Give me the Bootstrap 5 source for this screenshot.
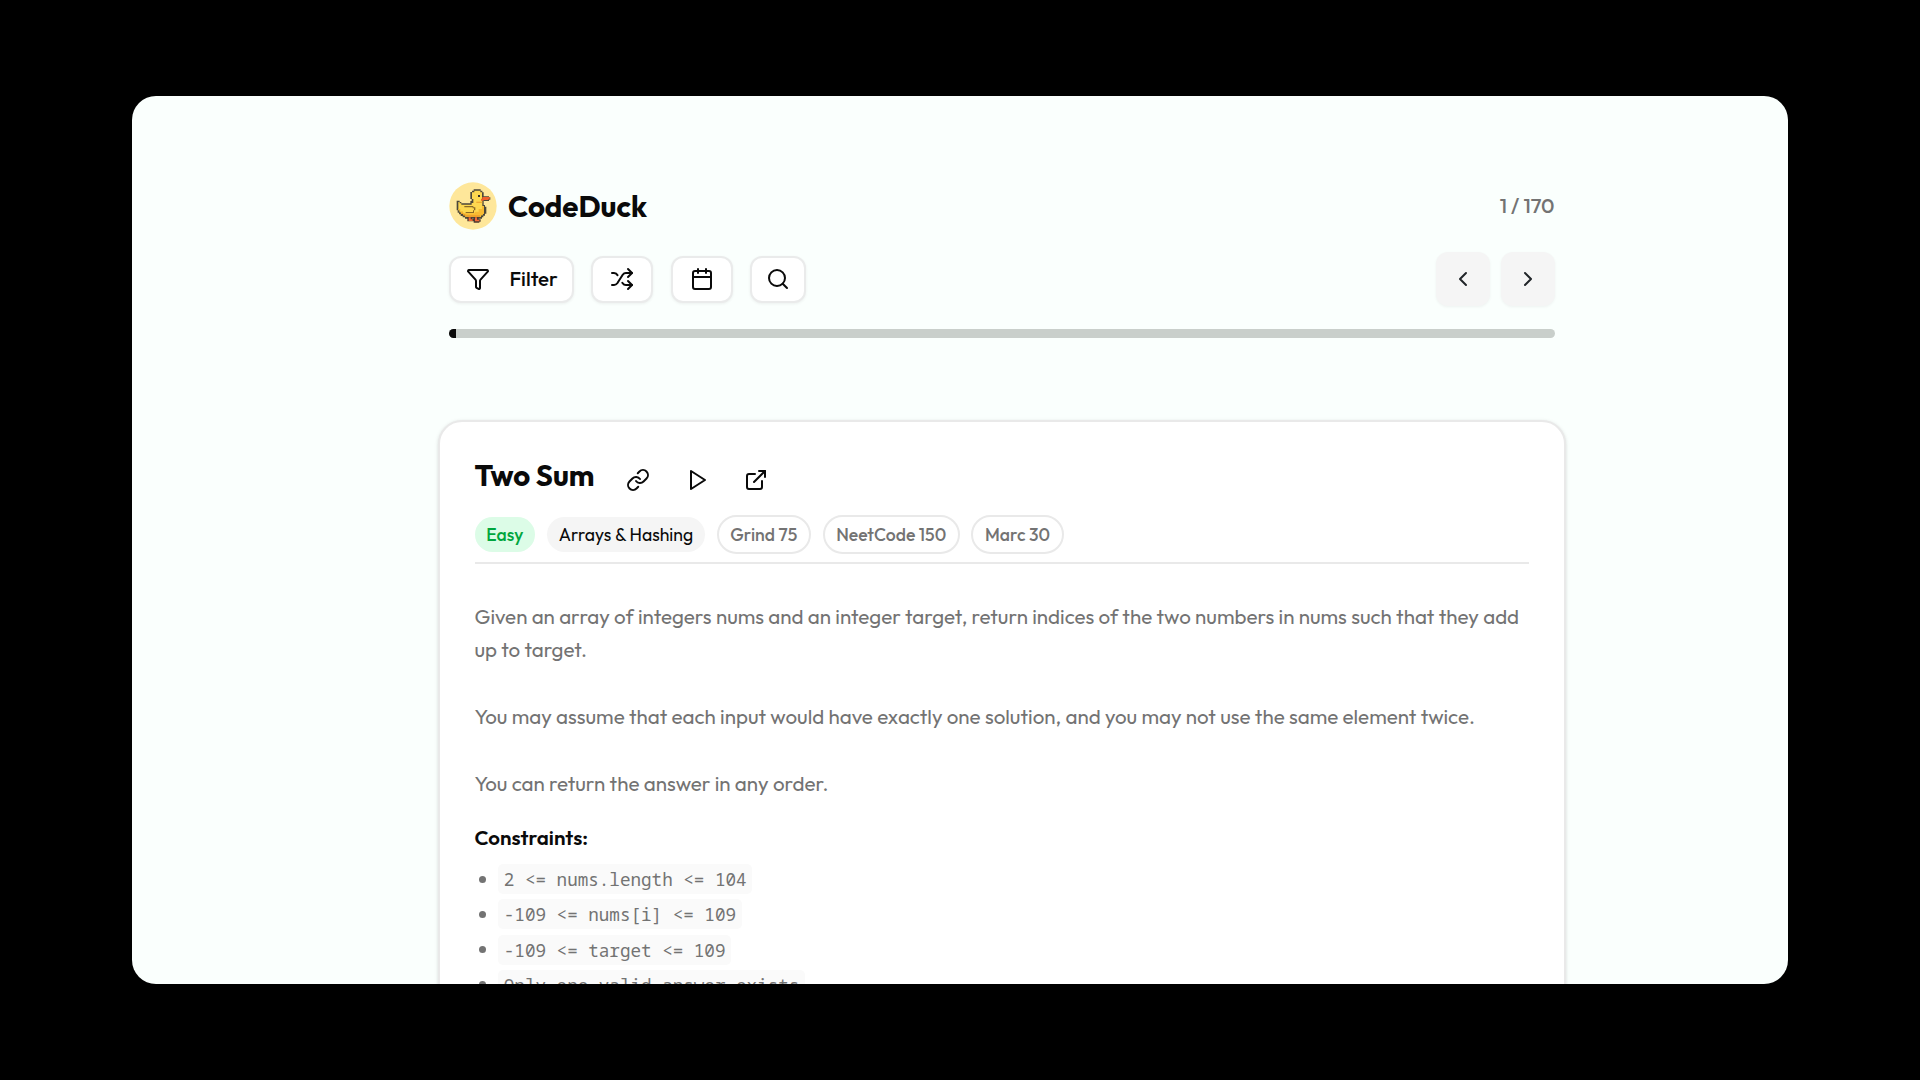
<!DOCTYPE html>
<html lang="en">
<head>
<meta charset="utf-8">
<meta name="viewport" content="width=device-width, initial-scale=1">
<title>CodeDuck</title>
<link rel="stylesheet" href="https://cdn.jsdelivr.net/npm/bootstrap@5.3.0/dist/css/bootstrap.min.css">
<style>
  body { background: #000; font-family: Outfit, Lato, sans-serif; color: #0a0a0a; height: 1080px; padding: 96px 132px; overflow: hidden; }
  .app-window { background: #fafffd; height: 888px; border-radius: 24px; padding: 86px 233.5px 0 317px; }
  .app-window svg { flex: none; fill: none; stroke: currentColor; stroke-width: 2; stroke-linecap: round; stroke-linejoin: round; }
  .app-window svg.duck { stroke: none; }
  .brand-name { font-size: 29.4px; font-weight: 700; line-height: 46px; padding-top: 2px; margin-left: 11px; }
  .counter { font-size: 20.5px; font-weight: 500; color: #737373; padding-bottom: 2px; }
  .toolbar { margin-top: 22px; }
  .tool { height: 47px; background: #fff; border: 2px solid #eaebeb; border-radius: 12px; box-shadow: 0 1px 3px rgba(0,0,0,.06); font-size: 20.5px; font-weight: 500; padding: 0 0 1px; color: #0a0a0a; }
  .tool-filter { width: 125px; padding-left: 14.5px; gap: 20px; }
  .tool-icon { width: 62px; }
  .tool-search { width: 56px; }
  .step { width: 54px; height: 54px; background: #f5f5f5; border-radius: 12px; border: 0; box-shadow: 0 1px 3px rgba(0,0,0,.05); padding: 0 0 1px; }
  .track { height: 9px; border-radius: 5px; background: #c9cfcb; margin-top: 22.5px; }
  .track .progress-bar { background: #0a0a0a; }
  .problem { margin: 82px -11px 0; height: 700px; border: 2px solid #e9e9e9; border-radius: 24px; background: #fff; padding: 36px 34.5px; box-shadow: 0 1px 4px rgba(0,0,0,.09), 0 1px 3px rgba(0,0,0,.06); }
  .problem h1 { font-size: 29.4px; font-weight: 700; line-height: 36px; margin: 0; }
  .actions { margin: 9px 0 0 31.5px; gap: 35px; }
  .tags { padding-bottom: 8px; border-bottom: 2px solid #e9e9e9; margin-top: 21.5px; gap: 11.7px; }
  .tag { font-size: 17.6px; line-height: 35px; border-radius: 20px; padding: 0 11.8px; white-space: nowrap; font-weight: 500; }
  .tag-easy { background: #dcfce7; color: #00a63e; }
  .tag-topic { background: #f5f5f5; font-weight: 400; }
  .tag-list { border: 2px solid #e9e9e9; color: #737373; padding: 0 11.6px; }
  .prose { padding-top: 35.5px; }
  .prose p { font-size: 20.55px; line-height: 33.45px; margin: 0 0 33.45px; color: #737373; }
  .prose p:last-of-type { margin-bottom: 21.5px; }
  .prose h2 { font-size: 20.5px; font-weight: 600; line-height: 30px; margin: 0; }
  .limits { margin: 10px 0 0; padding: 0; list-style: none; font-size: 20.5px; color: #737373; }
  .limits li { height: 35.2px; line-height: 35.2px; display: flex; align-items: center; gap: 12px; padding-left: 4.5px; }
  .limits li::before { content: ""; width: 7px; height: 7px; border-radius: 50%; background: #737373; }
  .limits code { font-family: "Noto Sans Mono", "Liberation Mono", monospace; font-size: 17.6px; line-height: 24px; color: #737373; background: #fafafa; border-radius: 5px; padding: 3px 5.8px; }
</style>
</head>
<body>
<main class="app-window overflow-hidden">
  <header class="d-flex align-items-center justify-content-between">
    <div class="d-flex align-items-center">
      <svg class="duck" width="48" height="48" viewBox="12 11 144 144">
        <circle cx="84" cy="83" r="71" fill="#fee79a"/>
        <path fill="#4c473a" d="M86 33h21v4h5v5h4v12h16v3h4v7h-4v4h-16v12h4v5h4v21h-4v6h-5v5h-4v4H60v-4h-7v-4h-6v-5h-5v-5h-4v-7h-3V67h9v4h5v4h27v-7h4v-6h-4V41h5v-4h5z"/>
        <path fill="#fdd850" d="M88 37h18v5h5v23h1v18h5v23h-4v5h-5v4H61v-4h-6v-4h-6v-5h-5v-6h-4V71h4v4h5v4h31v-5h5V62h-4V42h7z"/>
        <path fill="#f8bb32" d="M40 92h6v7h8v6h35v-5h12v-8h10v-8h6v22h-4v5h-5v4H61v-4h-6v-4h-6v-5h-5v-6h-4z"/>
        <path fill="#ec9c28" d="M94 70h18v3H94zM49 103h6v4h6v4h44v4H61v-4h-6v-4h-6z"/>
        <path fill="#8a6a26" d="M58 83h27v4h6v9h-4v8H62v-3h22v-5h3v-6h-4v-3H58z"/>
        <path fill="#33302a" d="M99 50h6v6h-6z"/>
        <path fill="#f0602c" d="M112 56h22v7h-4v2h-14v2h-8v-6h4z"/>
        <path fill="#4c3a30" d="M67 117h14v5h5v-5h15v6h6v7h-4v3H86v-4H67z"/>
        <path fill="#f26a35" d="M71 117h6v8h-6zM90 117h6v8h-6zM71 123h12v5H71zM90 124h13v5H90z"/>
      </svg>
      <span class="brand-name">CodeDuck</span>
    </div>
    <span class="counter">1 / 170</span>
  </header>

  <div class="toolbar d-flex align-items-center justify-content-between">
    <div class="d-flex align-items-center" style="gap:17.3px">
      <button class="btn tool tool-filter d-flex align-items-center">
        <svg width="24" height="24" viewBox="0 0 24 24"><path d="M10 20a1 1 0 0 0 .553.895l2 1A1 1 0 0 0 14 21v-7a2 2 0 0 1 .517-1.341L21.74 4.67A1 1 0 0 0 21 3H3a1 1 0 0 0-.742 1.67l7.225 7.989A2 2 0 0 1 10 14z"/></svg>
        <span>Filter</span>
      </button>
      <button class="btn tool tool-icon d-flex align-items-center justify-content-center" aria-label="Shuffle">
        <svg width="24" height="24" viewBox="0 0 24 24"><path d="m18 14 4 4-4 4"/><path d="m18 2 4 4-4 4"/><path d="M2 18h1.973a4 4 0 0 0 3.3-1.7l5.454-8.6a4 4 0 0 1 3.3-1.7H22"/><path d="M2 6h1.972a4 4 0 0 1 3.6 2.2"/><path d="M22 18h-6.041a4 4 0 0 1-3.3-1.8l-.359-.45"/></svg>
      </button>
      <button class="btn tool tool-icon d-flex align-items-center justify-content-center" aria-label="Calendar">
        <svg width="24" height="24" viewBox="0 0 24 24"><path d="M8 2v4M16 2v4"/><rect width="18" height="18" x="3" y="4" rx="2"/><path d="M3 10h18"/></svg>
      </button>
      <button class="btn tool tool-search d-flex align-items-center justify-content-center" aria-label="Search">
        <svg width="24" height="24" viewBox="0 0 24 24"><circle cx="11" cy="11" r="8"/><path d="m21 21-4.3-4.3"/></svg>
      </button>
    </div>
    <div class="d-flex" style="gap:11px">
      <button class="btn step d-flex align-items-center justify-content-center" aria-label="Previous"><svg width="24" height="24" viewBox="0 0 24 24"><path d="m15 18-6-6 6-6"/></svg></button>
      <button class="btn step d-flex align-items-center justify-content-center" aria-label="Next"><svg width="24" height="24" viewBox="0 0 24 24"><path d="m9 18 6-6-6-6"/></svg></button>
    </div>
  </div>

  <div class="progress track"><div class="progress-bar" style="width:0.6%"></div></div>

  <article class="problem">
    <div class="d-flex align-items-center" style="height:36px">
      <h1>Two Sum</h1>
      <div class="actions d-flex">
        <svg width="24" height="24" viewBox="0 0 24 24"><path d="M10 13a5 5 0 0 0 7.54.54l3-3a5 5 0 0 0-7.07-7.07l-1.72 1.71"/><path d="M14 11a5 5 0 0 0-7.54-.54l-3 3a5 5 0 0 0 7.07 7.07l1.71-1.71"/></svg>
        <svg width="24" height="24" viewBox="0 0 24 24"><path d="m6 3 14 9-14 9z"/></svg>
        <svg width="24" height="24" viewBox="0 0 24 24"><path d="M15 3h6v6"/><path d="M10 14 21 3"/><path d="M18 13v6a2 2 0 0 1-2 2H5a2 2 0 0 1-2-2V8a2 2 0 0 1 2-2h6"/></svg>
      </div>
    </div>
    <div class="tags d-flex align-items-center">
      <span class="tag tag-easy">Easy</span>
      <span class="tag tag-topic">Arrays &amp; Hashing</span>
      <span class="tag tag-list">Grind 75</span>
      <span class="tag tag-list">NeetCode 150</span>
      <span class="tag tag-list">Marc 30</span>
    </div>
    <div class="prose">
      <p>Given an array of integers nums and an integer target, return indices of the two numbers in nums such that they add up to target.</p>
      <p>You may assume that each input would have exactly one solution, and you may not use the same element twice.</p>
      <p>You can return the answer in any order.</p>
      <h2>Constraints:</h2>
    </div>
    <ul class="limits">
      <li><code>2 &lt;= nums.length &lt;= 104</code></li>
      <li><code>-109 &lt;= nums[i] &lt;= 109</code></li>
      <li><code>-109 &lt;= target &lt;= 109</code></li>
      <li><code>Only one valid answer exists</code></li>
    </ul>
  </article>
</main>
<script src="https://cdn.jsdelivr.net/npm/bootstrap@5.3.0/dist/js/bootstrap.bundle.min.js"></script>
</body>
</html>
